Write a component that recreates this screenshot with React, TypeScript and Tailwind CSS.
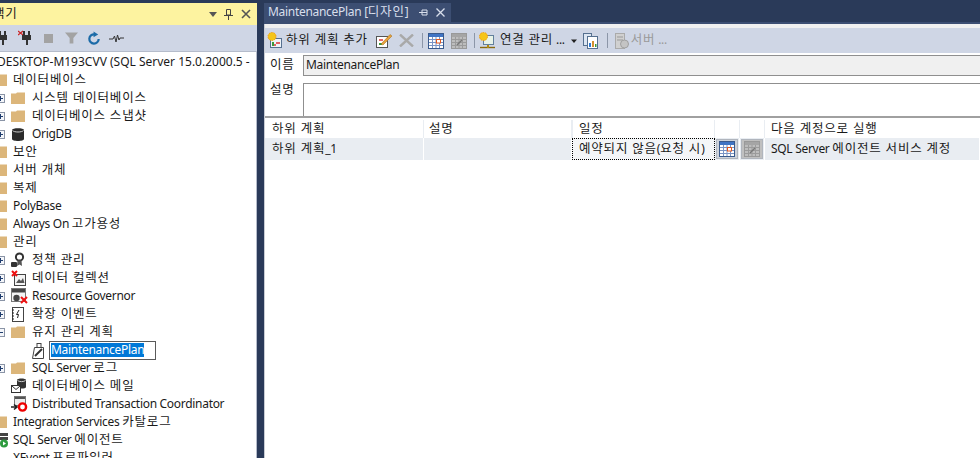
import React from "react";

const Txt = ({ t, latin = "text-[12px] tracking-[-0.3px]" }: { t: string; latin?: string }) => {
  const parts = t.split(/([가-힣]+(?: [가-힣]+)*)/).filter(Boolean);
  return (
    <span className="whitespace-pre">
      {parts.map((p, i) =>
        /[가-힣]/.test(p) ? (
          <span key={i} className="text-[12.5px] tracking-[0.8px]">{p}</span>
        ) : (
          <span key={i} className={latin}>{p}</span>
        )
      )}
    </span>
  );
};

const Folder = () => (
  <svg width="14" height="12" viewBox="0 0 14 12" className="shrink-0">
    <path d="M0 1.5 L5 1.5 L6 0.5 L14 0.5 L14 12 L0 12 Z" fill="#dcb67a" />
  </svg>
);

const Expander = ({ open }: { open?: boolean }) => (
  <svg width="9" height="9" viewBox="0 0 9 9" className="shrink-0">
    <rect x="0.5" y="0.5" width="8" height="8" fill="#f4f6fa" stroke="#8a94a6" />
    <path d={open ? "M2 4.5H7" : "M2 4.5H7M4.5 2V7"} stroke="#1f3d6e" strokeWidth="1" />
  </svg>
);

const Db = () => (
  <svg width="14" height="15" viewBox="0 0 14 15" className="shrink-0">
    <path d="M1 3C1 0.6 13 0.6 13 3V12C13 14.6 1 14.6 1 12Z" fill="#2b2b2b" />
    <path d="M1.5 3.5C3 5.5 11 5.5 12.5 3.5" stroke="#cfcfcf" fill="none" />
  </svg>
);

const Policy = () => (
  <svg width="16" height="16" viewBox="0 0 16 16" className="shrink-0">
    <circle cx="8.5" cy="5" r="3.6" fill="none" stroke="#333" strokeWidth="2" />
    <path d="M6.5 8.5L6 14L8.5 12.5L11 14L10.5 8.5" fill="#555" />
    <rect x="0" y="10" width="6" height="5" rx="1" fill="#333" />
  </svg>
);

const Collect = () => (
  <svg width="17" height="16" viewBox="0 0 17 16" className="shrink-0">
    <rect x="3.5" y="4.5" width="11" height="11" fill="#f4f4f4" stroke="#444" />
    <path d="M5 13L8 9L10 11L12 8L13.5 13Z" fill="#555" />
    <path d="M1 1L6 6M6 1L1 6" stroke="#e11" strokeWidth="2" />
  </svg>
);

const Governor = () => (
  <svg width="17" height="16" viewBox="0 0 17 16" className="shrink-0">
    <rect x="0.5" y="0.5" width="14" height="13" fill="#f3f3f3" stroke="#777" />
    <rect x="1" y="1" width="13" height="3.5" fill="#444" />
    <circle cx="5.5" cy="10" r="3.2" fill="#444" />
    <path d="M10 9L16 15M16 9L10 15" stroke="#e11" strokeWidth="2" />
  </svg>
);

const Events = () => (
  <svg width="14" height="15" viewBox="0 0 14 15" className="shrink-0">
    <rect x="1.5" y="0.5" width="11" height="14" fill="#fff" stroke="#444" />
    <path d="M1 3H3M1 6H3M1 9H3M1 12H3" stroke="#222" />
    <path d="M8 3L5.5 7.5H7.5L6.5 11" stroke="#222" fill="none" />
  </svg>
);

const Plan = () => (
  <svg width="16" height="17" viewBox="0 0 16 17" className="shrink-0">
    <path d="M3.5 5.5H12.5V16.5H1.5Z" fill="#fff" stroke="#444" />
    <rect x="6" y="1.5" width="4" height="4" fill="none" stroke="#444" />
    <path d="M4 14L11 7" stroke="#333" strokeWidth="2" />
  </svg>
);

const Mail = () => (
  <svg width="16" height="16" viewBox="0 0 16 16" className="shrink-0">
    <path d="M6 2C6 0 15 0 15 2V9C15 11 6 11 6 9Z" fill="#333" />
    <path d="M6.5 2.5C8 4 13 4 14.5 2.5" stroke="#ccc" fill="none" />
    <rect x="0.5" y="7.5" width="9" height="7" fill="#fff" stroke="#333" />
    <path d="M1 8L5 11.5L9 8" stroke="#333" fill="none" />
  </svg>
);

const Dtc = () => (
  <svg width="17" height="16" viewBox="0 0 17 16" className="shrink-0">
    <rect x="3.5" y="0.5" width="11" height="9" fill="#ececec" stroke="#777" />
    <rect x="4" y="1" width="10" height="2" fill="#555" />
    <path d="M0 11H5M3 8.5L6 11L3 13.5" stroke="#222" strokeWidth="1.6" fill="none" />
    <circle cx="11.5" cy="11" r="3.6" fill="#fff" stroke="#e00" strokeWidth="2.4" />
  </svg>
);

const Agent = () => (
  <svg width="12" height="16" viewBox="0 0 12 16" className="shrink-0 ml-[7px]">
    <rect x="0" y="1" width="8" height="3" fill="#444" />
    <rect x="0" y="5" width="8" height="3" fill="#444" />
    <circle cx="4" cy="11.5" r="4" fill="#2e9b3f" />
    <path d="M3 9.5L6 11.5L3 13.5Z" fill="#fff" />
  </svg>
);

type Row = { t: string; lv: 0 | 1 | 2 | 3; icon?: React.ReactNode; exp?: "plus" | "minus"; edit?: boolean };

const rows: Row[] = [
  { t: "DESKTOP-M193CVV (SQL Server 15.0.2000.5 -", lv: 0 },
  { t: "데이터베이스", lv: 1, icon: <Folder /> },
  { t: "시스템 데이터베이스", lv: 2, icon: <Folder />, exp: "plus" },
  { t: "데이터베이스 스냅샷", lv: 2, icon: <Folder />, exp: "plus" },
  { t: "OrigDB", lv: 2, icon: <Db />, exp: "plus" },
  { t: "보안", lv: 1, icon: <Folder /> },
  { t: "서버 개체", lv: 1, icon: <Folder /> },
  { t: "복제", lv: 1, icon: <Folder /> },
  { t: "PolyBase", lv: 1, icon: <Folder /> },
  { t: "Always On 고가용성", lv: 1, icon: <Folder /> },
  { t: "관리", lv: 1, icon: <Folder /> },
  { t: "정책 관리", lv: 2, icon: <Policy />, exp: "plus" },
  { t: "데이터 컬렉션", lv: 2, icon: <Collect />, exp: "plus" },
  { t: "Resource Governor", lv: 2, icon: <Governor />, exp: "plus" },
  { t: "확장 이벤트", lv: 2, icon: <Events />, exp: "plus" },
  { t: "유지 관리 계획", lv: 2, icon: <Folder />, exp: "minus" },
  { t: "MaintenancePlan", lv: 3, icon: <Plan />, edit: true },
  { t: "SQL Server 로그", lv: 2, icon: <Folder />, exp: "plus" },
  { t: "데이터베이스 메일", lv: 2, icon: <Mail /> },
  { t: "Distributed Transaction Coordinator", lv: 2, icon: <Dtc /> },
  { t: "Integration Services 카탈로그", lv: 1, icon: <Folder /> },
  { t: "SQL Server 에이전트", lv: 1, icon: <Agent /> },
  { t: "XEvent 프로파일러", lv: 1 },
];

const TreeRow = ({ r }: { r: Row }) => {
  if (r.lv === 0) {
    return (
      <div className="h-[18px] flex items-center -ml-[3px] whitespace-nowrap">
        <Txt t={r.t} latin="text-[12px]" />
      </div>
    );
  }
  if (r.lv === 1) {
    return (
      <div className="h-[18px] flex items-center -ml-[7px] whitespace-nowrap">
        <span className="w-[20px] shrink-0 flex items-center">{r.icon}</span>
        <Txt t={r.t} />
      </div>
    );
  }
  if (r.lv === 2) {
    return (
      <div className="h-[18px] flex items-center -ml-[4px] whitespace-nowrap">
        <span className="w-[15px] shrink-0 flex items-center">
          {r.exp ? <Expander open={r.exp === "minus"} /> : null}
        </span>
        <span className="w-[21px] shrink-0 flex items-center">{r.icon}</span>
        <Txt t={r.t} />
      </div>
    );
  }
  return (
    <div className="h-[18px] flex items-center pl-[31px] whitespace-nowrap">
      <span className="w-[18px] shrink-0 flex items-center">{r.icon}</span>
      <span className="h-[19px] w-[107px] border border-[#5a5a5a] flex items-center px-[1px] bg-white">
        <span className="bg-[#0078d7] text-white leading-[14px] text-[12px] tracking-[-0.3px]">{r.t}</span>
      </span>
    </div>
  );
};

const Plug = ({ x }: { x?: boolean }) => (
  <svg width="15" height="16" viewBox="0 0 15 16" className="shrink-0">
    {x && <path d="M0 1L5 5M5 1L0 5" stroke="#c22" strokeWidth="1.2" />}
    <path d="M6 1V5M11 1V5" stroke="#333" strokeWidth="2" />
    <path d="M4 5H13V10H10V15H8V10H4Z" fill="#333" />
  </svg>
);

const Calendar = ({ off }: { off?: boolean }) => (
  <svg width="16" height="16" viewBox="0 0 16 16" className="shrink-0">
    <rect x="0.5" y="0.5" width="15" height="15" fill={off ? "#bdbdbd" : "#fff"} stroke={off ? "#999" : "#3a5a8c"} />
    <rect x="1" y="1" width="14" height="3" fill={off ? "#a5a5a5" : "#3f74c4"} />
    <path d="M1 6.5H15M1 9.5H15M1 12.5H15M4.5 4V15M8 4V15M11.5 4V15" stroke={off ? "#9b9b9b" : "#7a94c4"} strokeWidth="1" />
    {off ? <path d="M6 12L11 7" stroke="#777" strokeWidth="1.5" /> : <rect x="8.5" y="6.5" width="4" height="3.5" fill="#fff" stroke="#e2571e" />}
  </svg>
);

const AddPlan = () => (
  <svg width="16" height="17" viewBox="0 0 16 17" className="shrink-0">
    <rect x="3.5" y="6.5" width="11" height="9" fill="#eef3f8" stroke="#56708f" />
    <path d="M6 13H9M9 11H13" stroke="#d33" strokeWidth="1.5" />
    <path d="M6 10V14" stroke="#3a9a3a" strokeWidth="2" />
    <circle cx="5" cy="4.5" r="4" fill="#f5c518" stroke="#f09a13" strokeDasharray="1.5 1" />
  </svg>
);

const EditIcon = () => (
  <svg width="17" height="16" viewBox="0 0 17 16" className="shrink-0">
    <rect x="0.5" y="3.5" width="11" height="11" fill="#fff" stroke="#555" />
    <path d="M3 11H6" stroke="#3a9a3a" strokeWidth="2" />
    <path d="M3 7H7" stroke="#d33" strokeWidth="1.5" />
    <path d="M5 11L14 1.5L16 3L7 12Z" fill="#e9a23b" stroke="#9a6a1c" strokeWidth="0.5" />
  </svg>
);

const ConnIcon = () => (
  <svg width="17" height="17" viewBox="0 0 17 17" className="shrink-0">
    <rect x="4.5" y="3.5" width="10" height="9" fill="#e8f3e8" stroke="#62809c" />
    <path d="M1 15.5H16" stroke="#8a6a10" strokeWidth="1.4" />
    <path d="M9 13V16" stroke="#b08a10" strokeWidth="2" />
    <circle cx="4.5" cy="4.5" r="4" fill="#f5c518" stroke="#f09a13" strokeDasharray="1.5 1" />
  </svg>
);

const ReportIcon = () => (
  <svg width="15" height="16" viewBox="0 0 15 16" className="shrink-0">
    <rect x="0.5" y="0.5" width="8" height="12" fill="#dde6f2" stroke="#56708f" />
    <rect x="4.5" y="3.5" width="10" height="12" fill="#fff" stroke="#56708f" />
    <rect x="6" y="10" width="2" height="4" fill="#2e7bd6" />
    <rect x="9" y="8" width="2" height="6" fill="#d6902e" />
    <rect x="12" y="11" width="1.5" height="3" fill="#3a9a3a" />
  </svg>
);

const ServerIcon = () => (
  <svg width="14" height="16" viewBox="0 0 14 16" className="shrink-0">
    <rect x="0.5" y="0.5" width="9" height="15" fill="#d0d0d0" stroke="#aaa" />
    <path d="M2 4H8M2 7H8" stroke="#999" />
    <circle cx="9.5" cy="11" r="4" fill="#c4c4c4" stroke="#a0a0a0" />
  </svg>
);

const Sep = () => <span className="block w-px h-[15px] bg-[#8c96a8] shrink-0" />;

const Dropdown = () => (
  <svg width="8" height="8" viewBox="0 0 8 8" className="shrink-0">
    <path d="M1 2.5H7L4 6Z" fill="#222" />
  </svg>
);

export default function App() {
  const font = { fontFamily: "'Noto Sans','Noto Sans CJK KR',sans-serif" };
  return (
    <div className="w-[980px] h-[458px] overflow-hidden bg-[#2a3a59] flex text-[12px] text-[#1a1a1a] leading-none" style={font}>
      {/* Left panel */}
      <div className="w-[257px] shrink-0 flex flex-col pt-[3px]">
        <div className="h-[22px] bg-[#fdf3a0] flex items-center justify-between pr-[6px] shrink-0 overflow-hidden">
          <span className="-ml-[7px]"><Txt t="색기" /></span>
          <div className="flex items-center gap-[7px]">
            <svg width="8" height="5" viewBox="0 0 8 5"><path d="M0 0H8L4 5Z" fill="#555" /></svg>
            <svg width="9" height="11" viewBox="0 0 9 11"><path d="M2.5 0.5H6.5V6H2.5ZM0 6.5H9M4.5 7V11" stroke="#444" fill="none" /></svg>
            <svg width="10" height="10" viewBox="0 0 10 10" className="ml-[1px]"><path d="M1 1L9 9M9 1L1 9" stroke="#555" strokeWidth="1.6" /></svg>
          </div>
        </div>
        <div className="h-[26px] bg-[#cfd6e5] flex items-center shrink-0 -ml-[6px] gap-[8px]">
          <Plug />
          <span className="ml-[1px]"><Plug x /></span>
          <span className="w-[9px] h-[9px] bg-[#a3a3a3] ml-[3px]" />
          <svg width="13" height="14" viewBox="0 0 14 14" className="ml-[4px]"><path d="M0 1H14L9 7V13H5V7Z" fill="#a3a3a3" /></svg>
          <svg width="14" height="15" viewBox="0 0 15 15" className="ml-[1px]"><path d="M12.5 8A5 5 0 1 1 8 3" fill="none" stroke="#1c6ba8" strokeWidth="2.4" /><path d="M7 0L12 3.2L7 6.2Z" fill="#1c6ba8" /></svg>
          <svg width="15" height="9" viewBox="0 0 15 9"><path d="M0 5H4L5.5 2L7 8L8.5 1L10 6L11 4H15" stroke="#333" fill="none" /></svg>
        </div>
        <div className="flex-1 bg-white border-t border-r border-[#b5bccb] overflow-hidden pt-[1px]">
          {rows.map((r) => (
            <TreeRow key={r.t} r={r} />
          ))}
        </div>
      </div>

      {/* Right area */}
      <div className="flex-1 flex flex-col pl-[7px] pt-[3px] min-w-0">
        <div className="h-[19px] w-[187px] bg-[#3c4e72] flex items-center justify-between px-[4px] text-[#d8dfec] shrink-0">
          <span className="whitespace-nowrap"><Txt t="MaintenancePlan [디자인]" /></span>
          <span className="flex items-center gap-[8px] pr-[2px]">
            <svg width="9" height="9" viewBox="0 0 9 9"><path d="M0 4.5H3M3 2V7H8V2ZM3 4.5H8" stroke="#d8dfec" fill="none" /></svg>
            <svg width="9" height="9" viewBox="0 0 9 9"><path d="M0.5 0.5L8.5 8.5M8.5 0.5L0.5 8.5" stroke="#d8dfec" strokeWidth="1.3" /></svg>
          </span>
        </div>
        <div className="h-[2px] bg-[#3c4e72] shrink-0" />
        <div className="flex-1 bg-white flex flex-col min-h-0 border-l border-[#c8ccd4]">
          <div className="h-[4px] bg-[#f0f0f0] shrink-0" />
          <div className="h-[25px] bg-[#cfd6e5] flex items-center pl-[2px] shrink-0 whitespace-nowrap">
            <AddPlan />
            <span className="ml-[3px]"><Txt t="하위 계획 추가" /></span>
            <span className="ml-[8px]"><EditIcon /></span>
            <svg width="15" height="13" viewBox="0 0 15 13" className="ml-[6px]"><path d="M1 0.5L14 12.5M14 0.5L1 12.5" stroke="#a9a9a9" strokeWidth="2.4" /></svg>
            <span className="ml-[8px]"><Sep /></span>
            <span className="ml-[5px]"><Calendar /></span>
            <span className="ml-[7px]"><Calendar off /></span>
            <span className="ml-[7px]"><Sep /></span>
            <span className="ml-[4px]"><ConnIcon /></span>
            <span className="ml-[4px]"><Txt t="연결 관리 ..." /></span>
            <span className="ml-[5px]"><Dropdown /></span>
            <span className="ml-[5px]"><ReportIcon /></span>
            <span className="ml-[9px]"><Sep /></span>
            <span className="ml-[7px]"><ServerIcon /></span>
            <span className="ml-[2px] text-[#9a9a9a]"><Txt t="서버 ..." /></span>
          </div>
          <div className="h-[24px] flex items-center shrink-0">
            <span className="w-[38px] pl-[5px] shrink-0"><Txt t="이름" /></span>
            <div className="flex-1 h-[21px] bg-[#f0f0f0] border-t border-l border-b border-[#8f8f8f] flex items-center pl-[2px]"><Txt t="MaintenancePlan" /></div>
          </div>
          <div className="h-[39px] flex items-start shrink-0 pt-[6px]">
            <span className="w-[38px] pl-[5px] shrink-0 pt-[1px]"><Txt t="설명" /></span>
            <div className="flex-1 h-[33px] bg-white border-t border-l border-[#8f8f8f]" />
          </div>
          <div className="h-[4px] bg-white border-t-2 border-[#a0a0a0] shrink-0" />
          <div className="grid grid-cols-[159px_148px_143px_25px_25px_1fr] shrink-0 whitespace-nowrap">
            <div className="h-[18px] border-r border-[#e9edf2] pl-[7px] flex items-center"><Txt t="하위 계획" /></div>
            <div className="h-[18px] border-r border-[#e9edf2] pl-[5px] flex items-center"><Txt t="설명" /></div>
            <div className="h-[18px] border-r border-l border-[#e9edf2] pl-[6px] flex items-center"><Txt t="일정" /></div>
            <div className="h-[18px] border-r border-[#e9edf2]" />
            <div className="h-[18px] border-r border-[#e9edf2]" />
            <div className="h-[18px] pl-[6px] flex items-center"><Txt t="다음 계정으로 실행" /></div>
            <div className="h-[22px] bg-[#e9edf2] border-r border-white pl-[7px] flex items-center"><Txt t="하위 계획_1" /></div>
            <div className="h-[22px] bg-[#e9edf2] border-r border-white" />
            <div className="h-[22px] border border-dotted border-black bg-[#f4f6f8] pl-[6px] flex items-center"><Txt t="예약되지 않음(요청 시)" /></div>
            <div className="h-[22px] bg-[#e9edf2] flex items-center justify-center border-r border-white">
              <span className="w-[22px] h-[20px] bg-[#cdd2da] border border-[#b0b5bd] flex items-center justify-center"><Calendar /></span>
            </div>
            <div className="h-[22px] bg-[#e9edf2] flex items-center justify-center border-r border-white">
              <span className="w-[22px] h-[20px] bg-[#c0c0c0] border border-[#b0b5bd] flex items-center justify-center"><Calendar off /></span>
            </div>
            <div className="h-[22px] bg-[#e9edf2] pl-[6px] flex items-center mr-[1px]"><Txt t="SQL Server 에이전트 서비스 계정" /></div>
          </div>
        </div>
      </div>
    </div>
  );
}
